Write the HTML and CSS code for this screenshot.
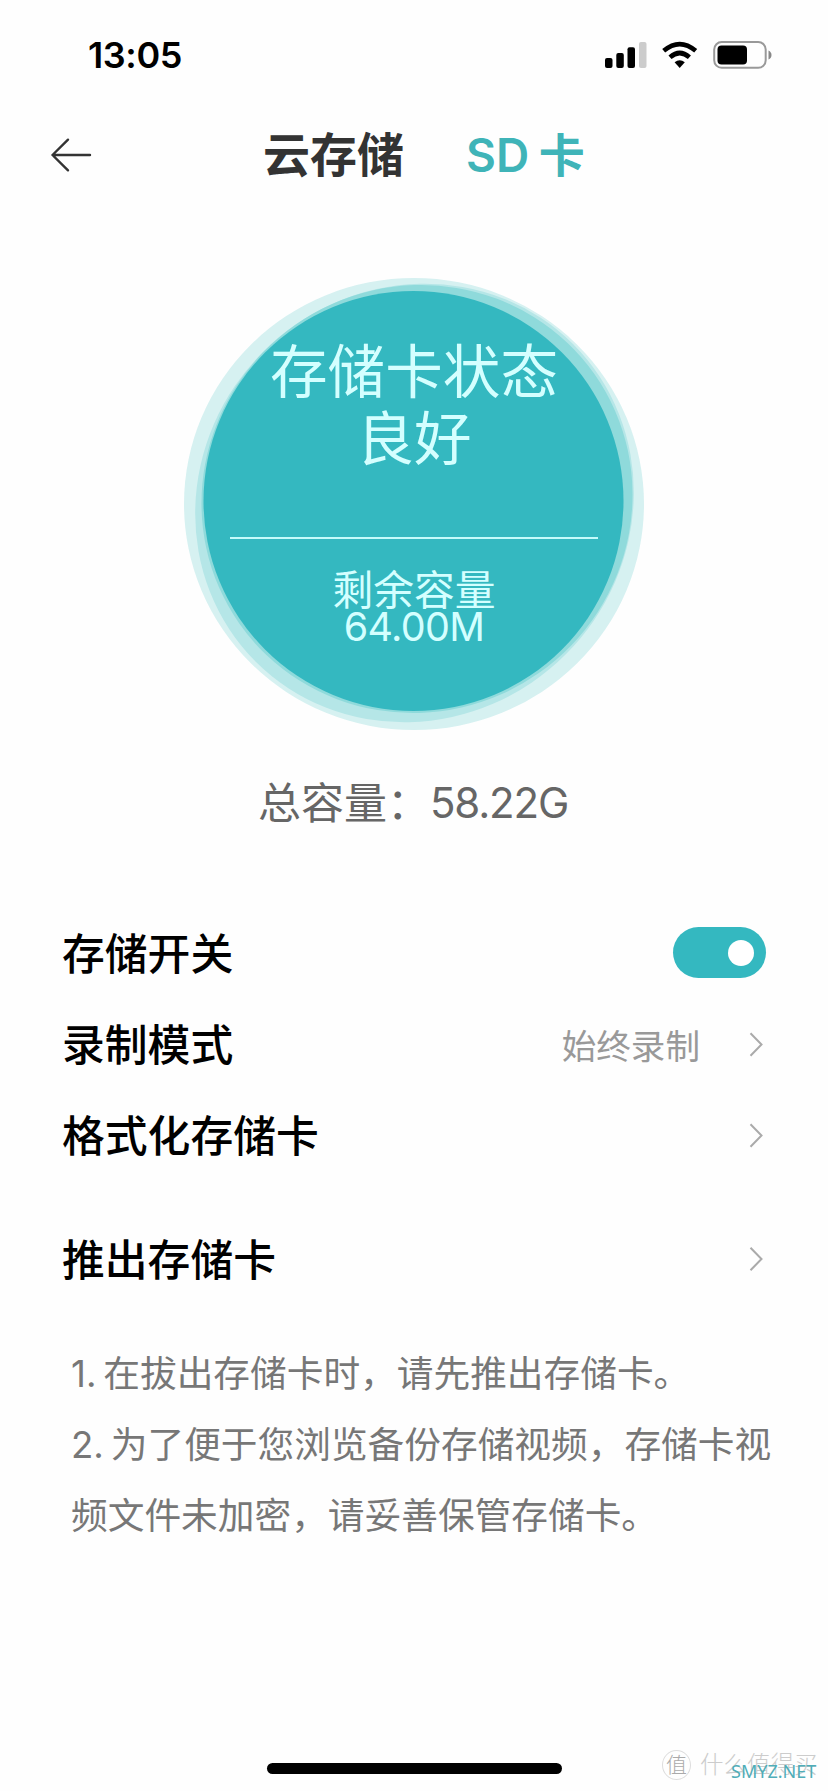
FILE: index.html
```
<!DOCTYPE html>
<html lang="zh-CN">
<head>
<meta charset="utf-8">
<title>SD 卡</title>
<link rel="stylesheet" href="styles.css">
</head>
<body>
<div class="screen">
  <div class="status">
    <span class="time">13:05</span>
    <svg class="status-icons" width="168" height="28" viewBox="0 0 168 28">
      <rect x="0" y="17" width="7.5" height="10" rx="2"/>
      <rect x="11.3" y="12" width="7.5" height="15" rx="2"/>
      <rect x="22.5" y="6.300" width="7.500" height="20.700" rx="2"/>
      <rect x="34" y="1" width="7.500" height="26" rx="2" fill="#ccc"/>
      <g fill="none" stroke="#000" stroke-width="4.600">
        <path d="M58.700 9.800 Q74.700 -3.700 90.700 9.800"/>
        <path d="M65 16.300 Q74.700 7.700 84.400 16.300"/>
      </g>
      <path d="M69.600 21.300 Q74.700 17.300 79.800 21.300 L74.700 27 Z"/>
      <rect x="109.200" y="1" width="51.500" height="25.800" rx="7.500" fill="none" stroke="#999" stroke-width="2"/>
      <rect x="112.500" y="4.500" width="29.500" height="19" rx="4"/>
      <path d="M163.500 9.500 Q166.500 11 166.500 14 Q166.500 17 163.500 18.500 Z" fill="#888"/>
    </svg>
  </div>
  <div class="nav">
    <svg class="back" width="42" height="34" viewBox="0 0 42 34" fill="none" stroke="#333" stroke-width="2.400" stroke-linecap="round" stroke-linejoin="round">
      <path d="M18 1.700 L2.500 17 L18 32.300 M2.500 17 H40"/>
    </svg>
    <span class="tab">云存储</span>
    <span class="tab active">SD 卡</span>
  </div>
  <div class="gauge">
    <svg class="rings" width="462" height="454" viewBox="0 0 462 454">
      <ellipse cx="231" cy="227" rx="230" ry="226" fill="#d6f1f1"/>
      <ellipse cx="231.500" cy="226" rx="224.500" ry="214" transform="rotate(-45 231.500 226)" fill="#b5e6e7"/>
      <ellipse cx="234" cy="222" rx="217" ry="212.500" transform="rotate(-35 234 222)" fill="#8fdadb"/>
      <circle cx="230.500" cy="224" r="210" fill="#34b8c0"/>
    </svg>
    <div class="gauge-body">
      <div class="state">存储卡状态<br>良好</div>
      <div class="rule"></div>
      <div class="remain">剩余容量</div>
      <div class="amount">64.00M</div>
    </div>
  </div>
  <div class="total">总容量：<span class="total-value">58.22G</span></div>
  <div class="rows">
    <div class="row">
      <span class="label">存储开关</span>
      <span class="toggle"><span class="knob"></span></span>
    </div>
    <div class="row">
      <span class="label">录制模式</span>
      <span class="value">始终录制</span>
      <svg class="chevron" width="14" height="26" viewBox="0 0 14 26"><path d="M1.500 2.200 L12.500 13.500 L1.500 24.800"/></svg>
    </div>
    <div class="row">
      <span class="label">格式化存储卡</span>
      <svg class="chevron" width="14" height="26" viewBox="0 0 14 26"><path d="M1.500 2.200 L12.500 13.500 L1.500 24.800"/></svg>
    </div>
    <div class="row eject">
      <span class="label">推出存储卡</span>
      <svg class="chevron" width="14" height="26" viewBox="0 0 14 26"><path d="M1.500 1.700 L12.500 13 L1.500 24.300"/></svg>
    </div>
  </div>
  <div class="notes">
    <p>1. 在拔出存储卡时，请先推出存储卡。</p>
    <p>2. 为了便于您浏览备份存储视频，存储卡视频文件未加密，请妥善保管存储卡。</p>
  </div>
  <div class="home"></div>
  <div class="mark"><span class="mark-logo">值</span><span class="mark-text">什么值得买</span></div>
  <div class="site">SMYZ.NET</div>
</div>
</body>
</html>
```
FILE: styles.css
```
* { box-sizing: border-box; }
body {
  margin: 0;
  background: #fefefe;
  font-family: Inter, "Noto Sans CJK SC", sans-serif;
}
.screen {
  position: relative;
  width: 828px;
  height: 1791px;
  overflow: hidden;
  display: flex;
  flex-direction: column;
}
.status {
  height: 110px;
  padding: 0 55px 0 88px;
  display: flex;
  align-items: center;
}
.time { font-size: 36px; font-weight: 600; letter-spacing: -0.4px; }
.status-icons { margin-left: auto; }
.nav {
  height: 90px;
  padding-left: 50px;
  display: flex;
  align-items: center;
  white-space: nowrap;
}
.tab {
  font-size: 47px;
  line-height: 60px;
  font-weight: 600;
  color: #333;
  margin-left: 171px;
}
.active { color: #3fb4b8; margin-left: 62px; font-size: 46px; word-spacing: -2px; }
.gauge {
  position: relative;
  width: 462px;
  height: 454px;
  margin: 77px 0 0 183px;
}
.rings { position: absolute; left: 0; top: 0; }
.gauge-body {
  position: relative;
  padding-top: 62px;
  display: flex;
  flex-direction: column;
  align-items: center;
  color: #d4ffff;
}
.state { font-size: 57.6px; line-height: 67px; text-align: center; }
.rule { width: 368px; height: 2px; margin-top: 64px; background: #c4fbfb; }
.remain { font-size: 40.8px; line-height: 50px; margin-top: 26px; }
.amount { font-size: 39.5px; line-height: 40px; margin-top: -8px; letter-spacing: -0.7px; }
.total {
  height: 60px;
  margin: 42px 0 0 258px;
  display: flex;
  align-items: center;
  font-size: 43px;
  line-height: 60px;
  color: #666;
}
.total-value { font-size: 42px; letter-spacing: -1.2px; }
.rows { padding: 74px 62px 0 62px; }
.row {
  height: 91px;
  display: flex;
  align-items: center;
  justify-content: space-between;
  font-size: 42.8px;
  font-weight: 500;
  color: #000;
}
.label { padding-bottom: 4px; }
.eject { margin-top: 33px; }
.toggle {
  width: 93px;
  height: 51px;
  border-radius: 26px;
  padding-right: 12px;
  display: flex;
  align-items: center;
  justify-content: flex-end;
  background: #34b8c0;
}
.knob { width: 26px; height: 26px; border-radius: 50%; background: #fff; }
.value { margin-left: auto; margin-right: 49px; font-size: 34.6px; font-weight: 400; color: #999; }
.chevron { margin-right: 3px; fill: none; stroke: #aaa; stroke-width: 2; }
.notes { padding: 35px 50px 0 71px; }
.notes p {
  margin: 0;
  font-size: 36.7px;
  line-height: 70.8px;
  word-spacing: -3.5px;
  color: #777;
}
.home {
  position: absolute;
  left: 267px;
  top: 1763px;
  width: 295px;
  height: 11px;
  border-radius: 6px;
  background: #000;
}
.mark {
  position: absolute;
  left: 662px;
  top: 1749px;
  display: flex;
  align-items: center;
  gap: 9px;
  color: #ccc;
  white-space: nowrap;
  font-weight: 300;
}
.mark-logo {
  width: 29px;
  height: 30px;
  border: 1px solid #ddd;
  border-radius: 50%;
  font-size: 21px;
  line-height: 27px;
  text-align: center;
  color: #aaa;
}
.mark-text { font-size: 23.5px; line-height: 32px; }
.site {
  position: absolute;
  left: 731px;
  top: 1758px;
  font-family: "Noto Sans", sans-serif;
  font-size: 18px;
  line-height: 26px;
  color: #4fadb8;
}
```
